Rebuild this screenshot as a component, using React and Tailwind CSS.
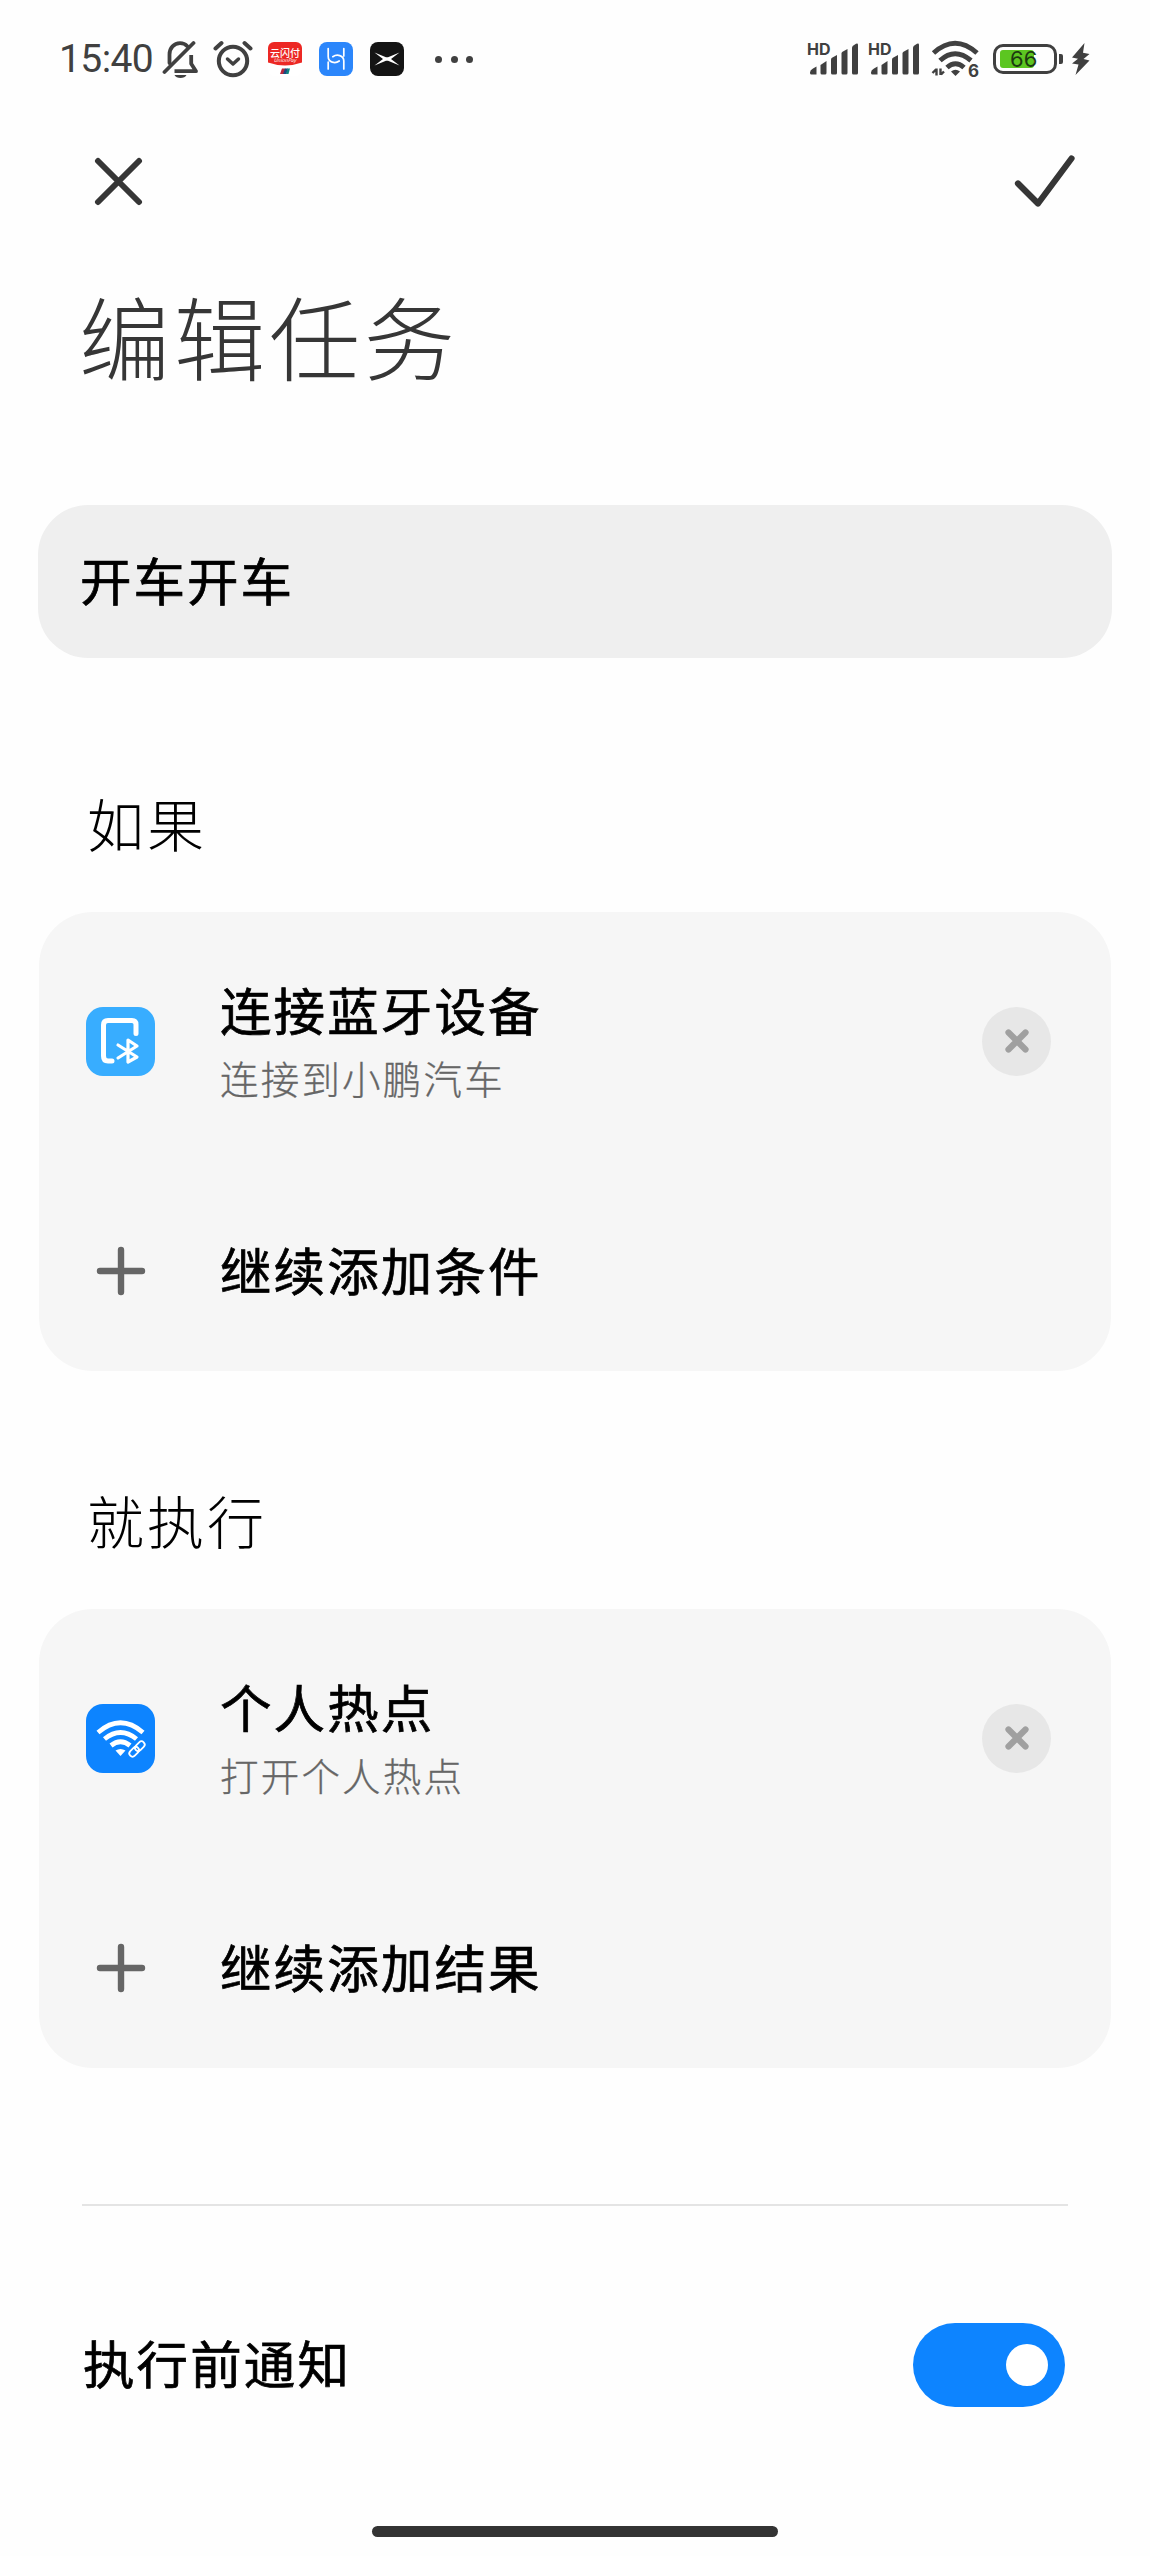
import React, { useState } from 'react';

const Plus = () => (
    <svg className="h-[50px] w-[50px]" viewBox="0 0 50 50" fill="none" stroke="#666666" strokeWidth="6.4" strokeLinecap="round">
        <path d="M25 4v42M4 25h42" />
    </svg>
);

const BellOff = () => (
    <svg className="h-10 w-9" viewBox="0 0 36 40" fill="none" stroke="#404040" strokeWidth="3.8" strokeLinecap="round" strokeLinejoin="round">
        <path d="M7.5 24V15.500c0-6.500 4.500-11.300 10.500-11.300 3 0 5.500 1.100 7.300 3" />
        <path d="M12.500 32.200H34l-4.800-7.500V16" strokeLinecap="butt" />
        <path d="M2.500 33 31.500 4" />
        <path d="M12.500 36h12c-1.500 4-10.500 4-12 0z" fill="#404040" stroke="none" />
    </svg>
);

const AlarmIcon = () => (
    <svg className="h-10 w-10" viewBox="0 0 40 40" fill="none" stroke="#404040" strokeWidth="4" strokeLinecap="round" strokeLinejoin="round">
        <circle cx="20" cy="22" r="14.200" />
        <path d="m14.500 20 5.500 5 5.500-5" strokeWidth="3.500" />
        <path d="M2.500 9.500 8.500 4M37.500 9.500 31.500 4" />
    </svg>
);

const UnionPayIcon = () => (
    <div className="relative h-[34px] w-[34px] overflow-hidden rounded-[6px] bg-white">
        <svg className="absolute inset-0 h-full w-full" viewBox="0 0 34 34">
            <path d="M0 0h34v20.500Q17 26.500 0 20.500z" fill="#ec2824" />
            <path d="M14 26.500h3.500L16 32h-4z" fill="#b8283c" />
            <path d="M17 26.500h3L18.500 32H15z" fill="#1d4a80" />
            <path d="M19.500 26.500H22L20.500 32H18z" fill="#0c8580" />
        </svg>
        <div className="absolute inset-x-0 top-[5px] text-center text-[10px] leading-[11px] font-medium text-white">云闪付</div>
        <div className="absolute inset-x-0 top-[15px] text-center text-[5px] leading-[6px] italic text-white">UnionPay</div>
    </div>
);

const CarLinkIcon = () => (
    <svg className="h-[34px] w-[34px]" viewBox="0 0 34 34">
        <rect width="34" height="34" rx="8" fill="#2b86fb" />
        <path d="M9.200 6.500v8c0 6 7 7.500 11 4.500M9.200 27V20M24.800 27v-8c0-6-7-7-11-4.300M24.800 6.500V14" fill="none" stroke="#fff" strokeWidth="1.700" strokeLinecap="round" />
    </svg>
);

const XpengIcon = () => (
    <svg className="h-[34px] w-[34px]" viewBox="0 0 34 34">
        <rect width="34" height="34" rx="8" fill="#141414" />
        <path d="M4.500 10.500 16 15.300h2l11.500-4.800-8.500 6.500 8.500 6.500L18 18.700h-2L4.500 23.500 13 17z" fill="#fff" />
    </svg>
);

const Signal = () => (
    <div className="relative h-9 w-[61px]">
        <span className="absolute left-0 top-0 font-['Inter','Noto_Sans_CJK_SC',sans-serif] text-[16px] leading-[17px] font-bold">HD</span>
        <svg className="absolute inset-0 h-full w-full" viewBox="0 0 61 36" fill="#404040">
            <path d="M3 31.500Q3 29 6 27.500L9.500 25.500V33.500H4.500Q3 33.500 3 32z" />
            <path d="M13.500 24 19.500 20V32Q19.500 33.500 18 33.500H15Q13.500 33.500 13.500 32z" />
            <path d="M24 18.500Q24 17.500 25 16.800L30 14V32Q30 33.500 28.500 33.500H25.500Q24 33.500 24 32z" />
            <path d="M34.500 12.500Q34.500 11.500 35.500 10.800L40.500 8V32Q40.500 33.500 39 33.500H36Q34.500 33.500 34.500 32z" />
            <path d="M45 7Q45 5.500 46 4.800L49 2.800Q51 2 51 4V32Q51 33.500 49.500 33.500H46.500Q45 33.500 45 32z" />
        </svg>
    </div>
);

const WifiIcon = () => (
    <div className="relative h-10 w-[50px]">
        <svg className="absolute inset-0 h-full w-full" viewBox="0 0 50 40" fill="none" stroke="#404040">
            <path d="M2.500 14Q24 -5.500 46 14" strokeWidth="5" />
            <path d="M9 21.500Q24 8 40 21.500" strokeWidth="5" />
            <path d="M16 28.500Q24.500 21 33 28.500" strokeWidth="5" />
            <path d="M20 32.500Q24.500 29 29 32.500L24.500 37z" fill="#404040" stroke="none" />
            <path d="M1.500 34 5 30.500M5.500 29.500V36.500M9.500 36V29.500M10 35.500l3-3" strokeWidth="2.400" />
        </svg>
        <span className="absolute left-[37px] top-[24px] font-['Inter','Noto_Sans_CJK_SC',sans-serif] text-[17px] leading-[17px] font-bold">6</span>
    </div>
);

const Battery = () => (
    <div className="flex items-center">
        <div className="relative h-[30px] w-[64px] rounded-[10px] border-[3px] border-[#404040]">
            <div className="absolute left-[4px] top-[3px] h-[18px] w-[34px] rounded-[3px] bg-[#5cc621]" />
            <span className="absolute left-[14px] top-0 font-['Inter','Noto_Sans_CJK_SC',sans-serif] text-[22px] leading-[24px] text-[#1c3a10]">66</span>
        </div>
        <div className="ml-[2px] h-[10px] w-[4px] rounded-r-[2px] bg-[#404040]" />
        <svg className="ml-[8px] h-[32px] w-[19px]" viewBox="0 0 19 32" fill="#404040">
            <path d="M13.500 0 1 14.500l6 1.200L1 20.500l6.500 1L4.500 32 18.500 17.500l-6-1.500 6-5-6.500-1.200z" />
        </svg>
    </div>
);

const BluetoothDevice = () => (
    <svg className="h-[69px] w-[69px]" viewBox="0 0 69 69" fill="none" stroke="#fff" strokeLinecap="round" strokeLinejoin="round">
        <rect width="69" height="69" rx="17" fill="#38adff" stroke="none" />
        <path d="M50 26.500V17.500Q50 13.500 46 13.500H22Q17.500 13.500 17.500 18V49Q17.500 54 22 54H26" strokeWidth="5" />
        <path d="m32 38 19 12-9 5V33l9 6-19 12" strokeWidth="3.200" />
    </svg>
);

const Hotspot = () => (
    <svg className="h-[69px] w-[69px]" viewBox="0 0 69 69" fill="none" stroke="#fff">
        <rect width="69" height="69" rx="17" fill="#0d84ff" stroke="none" />
        <path d="M12 28.500Q34.500 9 57 28.500" strokeWidth="4.600" />
        <path d="M18.500 35Q34.500 22 50.500 35" strokeWidth="4.800" />
        <path d="M25 41.500Q34.500 34 44 41.500" strokeWidth="4.800" />
        <path d="M29.500 46.500Q34.500 43.500 39.500 46.500L34.500 52z" fill="#fff" stroke="none" />
        <g transform="rotate(-45 51 45)" strokeWidth="1.800">
            <rect x="41.500" y="41.800" width="11" height="6.400" rx="3.200" />
            <rect x="49.500" y="41.800" width="11" height="6.400" rx="3.200" />
        </g>
    </svg>
);

const StatusBar = () => (
    <div className="flex h-[118px] items-center pl-[59px] pr-[60px] text-[#404040]">
        <div className="w-[103px] font-['Roboto','Noto_Sans_CJK_SC',sans-serif] text-[39px] leading-none tracking-[-0.6px]">15:40</div>
        <BellOff />
        <div className="ml-[15px]"><AlarmIcon /></div>
        <div className="ml-[15px] flex gap-[17px]">
            <UnionPayIcon />
            <CarLinkIcon />
            <XpengIcon />
        </div>
        <div className="ml-[31px] flex gap-[8.500px]">
            <i className="h-[7px] w-[7px] rounded-full bg-[#404040]" />
            <i className="h-[7px] w-[7px] rounded-full bg-[#404040]" />
            <i className="h-[7px] w-[7px] rounded-full bg-[#404040]" />
        </div>
        <div className="ml-auto flex items-center">
            <Signal />
            <Signal />
            <div className="ml-[2px] mr-[12px]"><WifiIcon /></div>
            <Battery />
        </div>
    </div>
);

const Card = ({ icon, title, subtitle, addLabel }) => (
    <section className="mx-[39px] h-[459px] rounded-[54px] bg-[#f6f6f6] pl-[47px] pr-[60px]">
        <div className="flex h-[258px] items-center">
            {icon}
            <div className="ml-[65px]">
                <div className="-mt-[2px] mb-[2px] text-[51.500px] leading-[72px] tracking-[2.100px] [-webkit-text-stroke:0.7px_#000]">{title}</div>
                <div className="text-[38.500px] leading-[60px] font-light tracking-[2.200px] text-[#666666] [-webkit-text-stroke:0.3px_#666]">{subtitle}</div>
            </div>
            <button className="ml-auto flex h-[69px] w-[69px] items-center justify-center rounded-full bg-[#e7e7e7]">
                <svg className="h-6 w-6" viewBox="0 0 24 24" stroke="#a0a0a0" strokeWidth="6.200" strokeLinecap="round">
                    <path d="m3.500 3.500 17 17M20.500 3.500l-17 17" />
                </svg>
            </button>
        </div>
        <div className="flex h-[201px] items-start pt-[64px]">
            <div className="ml-[10px] mt-[12px]"><Plus /></div>
            <div className="ml-[74px] text-[51.500px] leading-[70px] tracking-[2.100px] [-webkit-text-stroke:0.7px_#000]">{addLabel}</div>
        </div>
    </section>
);

const App = () => {
    const [notify, setNotify] = useState(true);

    return (
        <div className="flex h-[2556px] w-[1150px] flex-col overflow-hidden bg-[#fefefe] font-['Noto_Sans_CJK_SC',sans-serif] text-black">
            <StatusBar />

            <header className="flex h-[126px] items-center justify-between pl-[93px] pr-[75px]">
                <svg className="h-[50px] w-[50px]" viewBox="0 0 50 50" stroke="#363636" strokeWidth="6" strokeLinecap="round">
                    <path d="m5 5 41 41M46 5 5 46" />
                </svg>
                <svg className="h-[54px] w-[62px]" viewBox="0 0 62 54" fill="none" stroke="#363636" strokeWidth="6.200" strokeLinecap="round" strokeLinejoin="round">
                    <path d="m5 29.500 20 20L58.500 4.500" />
                </svg>
            </header>

            <h1 className="mt-[24px] h-[237px] pl-[79px] text-[91px] leading-[132px] font-light tracking-[4px] text-[#363636]">编辑任务</h1>

            <div className="mx-[38px] flex h-[153px] items-center rounded-[50px] bg-[#efefef] pb-[5px] pl-[42px] text-[51.500px] tracking-[2px] [-webkit-text-stroke:0.7px_#000]">
                开车开车
            </div>

            <h2 className="flex h-[254px] items-end pb-[46px] pl-[87px] text-[57px] leading-[88px] font-light tracking-[3px]">如果</h2>
            <Card icon={<BluetoothDevice />} title="连接蓝牙设备" subtitle="连接到小鹏汽车" addLabel="继续添加条件" />

            <h2 className="flex h-[238px] items-end pb-[46px] pl-[87px] text-[57px] leading-[88px] font-light tracking-[3px]">就执行</h2>
            <Card icon={<Hotspot />} title="个人热点" subtitle="打开个人热点" addLabel="继续添加结果" />

            <div className="mx-[82px] mt-[136px] h-[2px] bg-[#e4e4e4]" />

            <div className="mt-[117px] flex h-[84px] items-center justify-between pl-[83px] pr-[85px]">
                <span className="pb-[6px] text-[51.500px] tracking-[2.100px] [-webkit-text-stroke:0.7px_#000]">执行前通知</span>
                <button
                    onClick={() => setNotify(!notify)}
                    className={`flex h-[84px] w-[152px] items-center rounded-full px-[17px] ${notify ? 'justify-end bg-[#0d84ff]' : 'justify-start bg-[#e4e4e4]'}`}
                >
                    <span className="h-[42px] w-[42px] rounded-full bg-white" />
                </button>
            </div>

            <div className="mx-auto mt-[119px] h-[10.500px] w-[406px] rounded-full bg-[#333333]" />
        </div>
    );
};

export default App;
